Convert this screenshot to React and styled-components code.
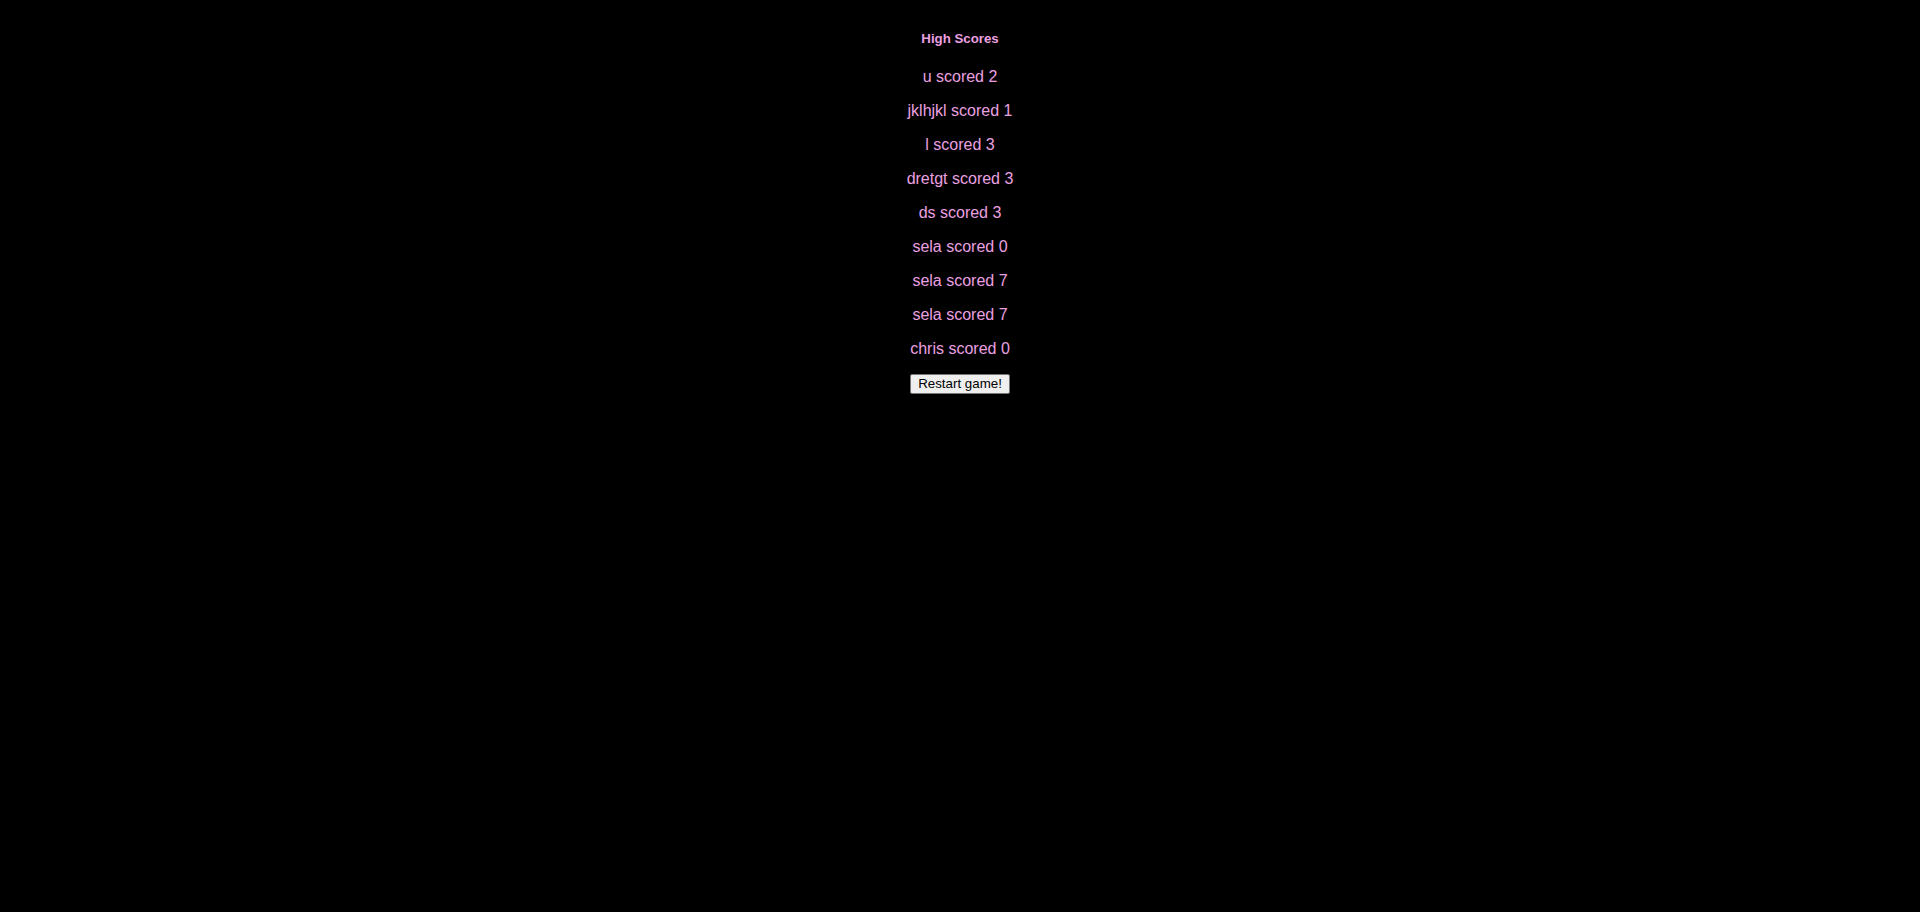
import React from "react";
import styled, { createGlobalStyle } from "styled-components";

const GlobalStyle = createGlobalStyle`
  html, body {
    background: #000000;
  }
  body {
    margin: 8px;
    font-family: "Liberation Sans", Arial, sans-serif;
  }
`;

const Board = styled.div`
  text-align: center;
  color: #eba0e0;
  padding-top: 2px;
`;

const Title = styled.h5`
  font-size: 13.28px;
  font-weight: bold;
  margin: 21px 0 22px;
  line-height: normal;
`;

const Row = styled.p`
  font-size: 16px;
  margin: 16px 0;
  line-height: normal;
`;

const RestartButton = styled.button`
  font-family: "Liberation Sans", Arial, sans-serif;
  font-size: 13.33px;
  color: #000000;
  background: #efefef;
  border: 1px solid #767676;
  border-radius: 2px;
  padding: 1px 6px;
  height: 20px;
  width: 100px;
  margin-top: -1px;
  cursor: pointer;
`;

const scores = [
  { name: "u", score: 2 },
  { name: "jklhjkl", score: 1 },
  { name: "l", score: 3 },
  { name: "dretgt", score: 3 },
  { name: "ds", score: 3 },
  { name: "sela", score: 0 },
  { name: "sela", score: 7 },
  { name: "sela", score: 7 },
  { name: "chris", score: 0 },
];

export default function App() {
  return (
    <>
      <GlobalStyle />
      <Board>
        <Title>High Scores</Title>
        {scores.map((s, i) => (
          <Row key={i}>
            {s.name} scored {s.score}
          </Row>
        ))}
        <RestartButton>Restart game!</RestartButton>
      </Board>
    </>
  );
}
